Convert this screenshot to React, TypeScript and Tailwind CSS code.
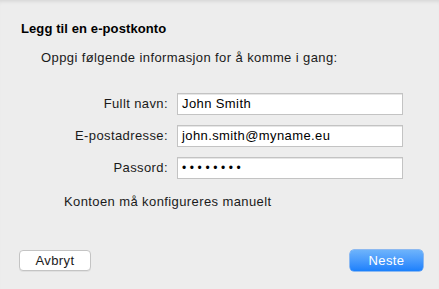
const font = { fontFamily: '"Liberation Sans", Arial, sans-serif' };

function Field({ label, children }: { label: string; children: React.ReactNode }) {
  return (
    <div className="flex items-center">
      <label className="w-[147px] text-right text-[13px] leading-[16px] tracking-[0.4px] text-[#1a1a1a]">{label}</label>
      <div className="ml-[9px] flex h-[22px] w-[226px] items-center border border-[#c3c3c3] bg-white pl-[4px] text-[13px] leading-[16px] tracking-[0.4px] text-black shadow-[inset_0_1px_0_#e6e6e6]">
        {children}
      </div>
    </div>
  );
}

export default function App() {
  return (
    <div
      className="flex h-[289px] w-[439px] flex-col bg-[#ededed] pl-[21px] pt-[21px] shadow-[inset_0_4px_4px_-3px_rgba(0,0,0,0.12)]"
      style={font}
    >
      <h1 className="text-[13px] font-bold leading-[16px] tracking-[0.1px] text-black">Legg til en e-postkonto</h1>
      <p className="mt-[13px] pl-[20px] text-[13px] leading-[16px] tracking-[0.4px] text-[#1a1a1a]">
        Oppgi følgende informasjon for å komme i gang:
      </p>

      <div className="mt-[27px] flex flex-col gap-[10px]">
        <Field label="Fullt navn:">John Smith</Field>
        <Field label="E-postadresse:">john.smith@myname.eu</Field>
        <Field label="Passord:">
          <span className="text-[12px] tracking-[3.6px]">••••••••</span>
        </Field>
      </div>

      <p className="mt-[15px] pl-[43px] text-[13px] leading-[16px] tracking-[0.4px] text-[#1a1a1a]">
        Kontoen må konfigureres manuelt
      </p>

      <div className="mt-auto flex items-center justify-between pb-[18px] pr-[16px]">
        <button className="-ml-[2px] h-[21px] w-[72px] rounded-[4px] border border-[#c4c4c4] bg-white text-[13px] leading-[16px] tracking-[0.4px] text-[#1a1a1a] shadow-[0_1px_0_rgba(0,0,0,0.05)]">
          Avbryt
        </button>
        <button className="h-[21px] w-[73px] rounded-[4px] bg-gradient-to-b from-[#6db3fb] to-[#1a80fc] text-[13px] leading-[16px] tracking-[0.4px] text-white shadow-[0_0_0_0.5px_#2f86f4]">
          Neste
        </button>
      </div>
    </div>
  );
}
